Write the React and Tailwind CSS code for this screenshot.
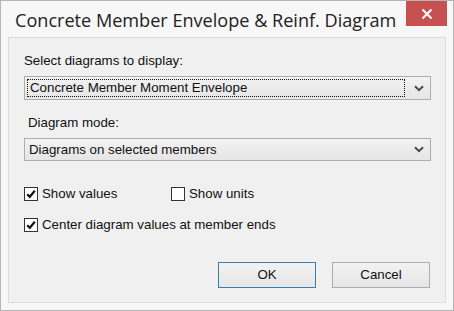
import React from "react";

function Chevron() {
  return (
    <svg width="10" height="7" viewBox="0 0 10 7" className="shrink-0">
      <path d="M1 1.2 L5 5.2 L9 1.2" fill="none" stroke="#4a4a4a" strokeWidth="2" />
    </svg>
  );
}

function Checkbox({ checked, label, className = "" }) {
  return (
    <div className={`flex items-center h-[16px] ${className}`}>
      <div className="w-[14px] h-[14px] border border-[#333] bg-white flex items-center justify-center shrink-0">
        {checked && (
          <svg width="10" height="10" viewBox="0 0 10 10">
            <path d="M1.2 5.2 L3.8 7.8 L8.8 1.8" fill="none" stroke="#111" strokeWidth="2.2" />
          </svg>
        )}
      </div>
      <span className="ml-[4px] text-[#111]">{label}</span>
    </div>
  );
}

export default function App() {
  return (
    <div
      className="w-[454px] h-[311px] border border-[#b4b4b4] bg-[#f7f7f7] flex flex-col overflow-hidden"
      style={{ fontFamily: '"Liberation Sans", Arial, sans-serif' }}
    >
      {/* Title bar */}
      <div className="flex items-start justify-between h-[36px] shrink-0">
        <div
          className="pl-[14px] pt-[6px] text-[18.1px] leading-[26px] text-[#222] whitespace-nowrap"
          style={{ fontFamily: '"Open Sans", "Noto Sans", sans-serif' }}
        >
          Concrete Member Envelope &amp; Reinf. Diagram
        </div>
        <div className="w-[41px] h-[25px] bg-[#c75050] mr-[6px] flex items-center justify-center shrink-0">
          <svg width="12" height="12" viewBox="0 0 12 12">
            <path d="M1.5 1.5 L10.5 10.5 M10.5 1.5 L1.5 10.5" stroke="#fff" strokeWidth="2" />
          </svg>
        </div>
      </div>

      {/* Client panel */}
      <div className="ml-[7px] w-[438px] h-[266px] border border-[#dcdcdc] bg-[#f0f0f0] pl-[15px] pr-[14px] flex flex-col text-[13.3px] leading-[16px]">
        <div className="mt-[15px] h-[16px] text-[#111]">Select diagrams to display:</div>

        <div className="mt-[7px] h-[24px] border border-[#adadad] bg-gradient-to-b from-[#f2f2f2] to-[#e6e6e6] flex items-center pl-[2px] pr-[6px]">
          <div className="flex-1 h-[18px] border border-dotted border-[#111] flex items-center pl-[2px] text-[#111] mr-[9px]">
            Concrete Member Moment Envelope
          </div>
          <Chevron />
        </div>

        <div className="mt-[15px] ml-[4px] h-[16px] text-[#111]">Diagram mode:</div>

        <div className="mt-[7px] h-[23px] border border-[#adadad] bg-gradient-to-b from-[#f2f2f2] to-[#e6e6e6] flex items-center pl-[4px] pr-[6px]">
          <div className="flex-1 text-[#111]">Diagrams on selected members</div>
          <Chevron />
        </div>

        <div className="mt-[25px] flex">
          <Checkbox checked label="Show values" className="w-[147px]" />
          <Checkbox label="Show units" />
        </div>

        <Checkbox checked label="Center diagram values at member ends" className="mt-[15px]" />

        <div className="mt-[29px] flex justify-end gap-[16px] pr-[1px]">
          <button className="w-[98px] h-[26px] border border-[#3c7fb1] bg-gradient-to-b from-[#f2f2f2] to-[#e6e6e6] text-[#111] text-[13.3px]">
            OK
          </button>
          <button className="w-[98px] h-[26px] border border-[#adadad] bg-gradient-to-b from-[#f2f2f2] to-[#e6e6e6] text-[#111] text-[13.3px]">
            Cancel
          </button>
        </div>
      </div>
    </div>
  );
}
